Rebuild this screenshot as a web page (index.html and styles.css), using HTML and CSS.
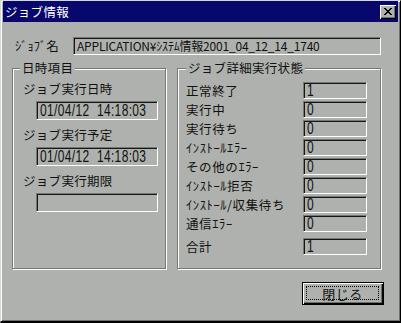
FILE: index.html
```html
<!DOCTYPE html>
<html lang="ja">
<head>
<meta charset="utf-8">
<title>ジョブ情報</title>
<link rel="stylesheet" href="styles.css">
</head>
<body>
<div class="window">
  <div class="titlebar">
    <span class="title">ジョブ情報</span>
    <span class="title-close">
      <svg width="8" height="7" viewBox="0 0 8 7" shape-rendering="crispEdges">
        <path fill="#000" d="M0 0h2v1H0zM6 0h2v1H6zM1 1h2v1H1zM5 1h2v1H5zM2 2h4v1H2zM3 3h2v1H3zM2 4h4v1H2zM1 5h2v1H1zM5 5h2v1H5zM0 6h2v1H0zM6 6h2v1H6z"/>
      </svg>
    </span>
  </div>
  <div class="content">
    <div class="name-row">
      <span class="name-label">ｼﾞｮﾌﾞ名</span>
      <div class="field name-field"><span class="name-val">APPLICATION¥ｼｽﾃﾑ情報2001_04_12_14_1740</span></div>
    </div>
    <div class="groups">
      <div class="group group-left">
        <span class="legend legend-left">日時項目</span>
        <div class="dt-label first">ジョブ実行日時</div>
        <div class="field dt-field"><span class="num">01/04/12  14:18:03</span></div>
        <div class="dt-label">ジョブ実行予定</div>
        <div class="field dt-field"><span class="num">01/04/12  14:18:03</span></div>
        <div class="dt-label">ジョブ実行期限</div>
        <div class="field dt-field"><span class="num"></span></div>
      </div>
      <div class="group group-right">
        <span class="legend legend-right">ジョブ詳細実行状態</span>
        <div class="stat-row first"><span class="stat-label">正常終了</span><div class="field stat-field"><span class="num">1</span></div></div>
        <div class="stat-row"><span class="stat-label">実行中</span><div class="field stat-field"><span class="num">0</span></div></div>
        <div class="stat-row"><span class="stat-label">実行待ち</span><div class="field stat-field"><span class="num">0</span></div></div>
        <div class="stat-row"><span class="stat-label">ｲﾝｽﾄｰﾙｴﾗｰ</span><div class="field stat-field"><span class="num">0</span></div></div>
        <div class="stat-row"><span class="stat-label">その他のｴﾗｰ</span><div class="field stat-field"><span class="num">0</span></div></div>
        <div class="stat-row"><span class="stat-label">ｲﾝｽﾄｰﾙ拒否</span><div class="field stat-field"><span class="num">0</span></div></div>
        <div class="stat-row"><span class="stat-label">ｲﾝｽﾄｰﾙ/収集待ち</span><div class="field stat-field"><span class="num">0</span></div></div>
        <div class="stat-row"><span class="stat-label">通信ｴﾗｰ</span><div class="field stat-field"><span class="num">0</span></div></div>
        <div class="stat-row total"><span class="stat-label">合計</span><div class="field stat-field"><span class="num">1</span></div></div>
      </div>
    </div>
    <div class="btn-row">
      <button class="btn-close" type="button"><span class="focus">閉じる</span></button>
    </div>
  </div>
</div>
</body>
</html>
```
FILE: styles.css
```css
* {
  box-sizing: border-box;
}

html, body {
  margin: 0;
  padding: 0;
  background: #aeb1ad;
}

body {
  font-family: "Noto Sans CJK JP", sans-serif;
  font-size: 12px;
  color: #111;
}

.window {
  width: 401px;
  height: 323px;
  background: #aeb1ad;
  border-top: 1px solid #d6d8d4;
  border-left: 1px solid #d6d8d4;
  border-right: 1px solid #000;
  border-bottom: 2px solid #000;
  box-shadow: inset 1px 1px 0 #fff, inset -1px -1px 0 #6e706c;
  padding: 0 2px 2px 2px;
  display: flex;
  flex-direction: column;
}

.titlebar {
  height: 21px;
  background: #07076c;
  display: flex;
  align-items: center;
  justify-content: space-between;
  padding: 0 2px 0 2px;
}

.title {
  color: #fff;
  font-size: 12.5px;
  line-height: 16px;
  letter-spacing: 0.3px;
}

.title-close {
  width: 16px;
  height: 14px;
  background: #aeb1ad;
  box-shadow: inset 1px 1px 0 #fff, inset -1px -1px 0 #000, inset -2px -2px 0 #6e706c;
  display: flex;
  align-items: center;
  justify-content: center;
  padding: 0 1px 1px 0;
}

.title-close svg {
  display: block;
}

.content {
  flex: 1;
  display: flex;
  flex-direction: column;
}

.name-row {
  display: flex;
  align-items: center;
  margin-top: 15px;
  padding-left: 12px;
}

.name-label {
  width: 58px;
  line-height: 16px;
  font-size: 12.5px;
}

.field {
  background: #aeb1ad;
  border-top: 1px solid #767874;
  border-left: 1px solid #767874;
  border-right: 1px solid #fff;
  border-bottom: 1px solid #fff;
  box-shadow: inset 1px 1px 0 #161616;
  display: flex;
  align-items: center;
  padding-left: 3px;
  overflow: hidden;
}

.name-field {
  width: 308px;
  height: 18px;
}

.name-val {
  font-size: 12px;
  line-height: 14px;
  white-space: nowrap;
  letter-spacing: -0.2px;
}

.groups {
  display: flex;
  gap: 11px;
  margin-top: 13px;
  padding-left: 9px;
}

.group {
  height: 201px;
  border: 1px solid #767874;
  box-shadow: inset 1px 1px 0 #fff, 1px 1px 0 #fff;
  display: flex;
  flex-direction: column;
}

.group-left {
  width: 154px;
  padding-left: 10px;
}

.group-right {
  width: 204px;
  padding-left: 8px;
}

.legend {
  align-self: flex-start;
  margin-top: -9px;
  line-height: 16px;
  font-size: 12.5px;
  padding: 0 2px;
  background: #aeb1ad;
  letter-spacing: 0.3px;
}

.legend-left {
  margin-left: -3px;
}

.legend-right {
  margin-left: 0;
}

.dt-label {
  line-height: 16px;
  font-size: 12.5px;
  margin-top: 7px;
  letter-spacing: 0.3px;
}

.dt-label.first {
  margin-top: 5px;
}

.dt-field {
  width: 122px;
  height: 19px;
  margin-left: 13px;
  margin-top: 4px;
}

.num {
  display: inline-block;
  font-family: "Liberation Sans", Arial, sans-serif;
  font-size: 12px;
  line-height: 12px;
  letter-spacing: 0.35px;
  white-space: pre;
  transform: scaleY(1.3);
  transform-origin: left center;
  color: #111;
}

.stat-row {
  display: flex;
  align-items: center;
  height: 17px;
  margin-top: 2px;
}

.stat-row.first {
  margin-top: 6px;
}

.stat-row.total {
  margin-top: 6px;
}

.stat-label {
  width: 117px;
  line-height: 16px;
  font-size: 12.5px;
  letter-spacing: 0.6px;
  white-space: nowrap;
}

.stat-field {
  width: 64px;
  height: 17px;
}

.btn-row {
  display: flex;
  justify-content: flex-end;
  margin-top: 13px;
  padding-right: 14px;
}

.btn-close {
  width: 82px;
  height: 23px;
  margin: 0;
  padding: 3px 4px 4px 3px;
  background: #aeb1ad;
  border: 1px solid #000;
  box-shadow: inset 1px 1px 0 #fff, inset -1px -1px 0 #000, inset -2px -2px 0 #6e706c;
  font-family: "Noto Sans CJK JP", sans-serif;
  font-size: 13px;
  color: #111;
  display: flex;
}

.focus {
  flex: 1;
  border: 1px dotted #000;
  display: flex;
  align-items: center;
  justify-content: center;
  line-height: 13px;
  letter-spacing: 0.5px;
}
```
